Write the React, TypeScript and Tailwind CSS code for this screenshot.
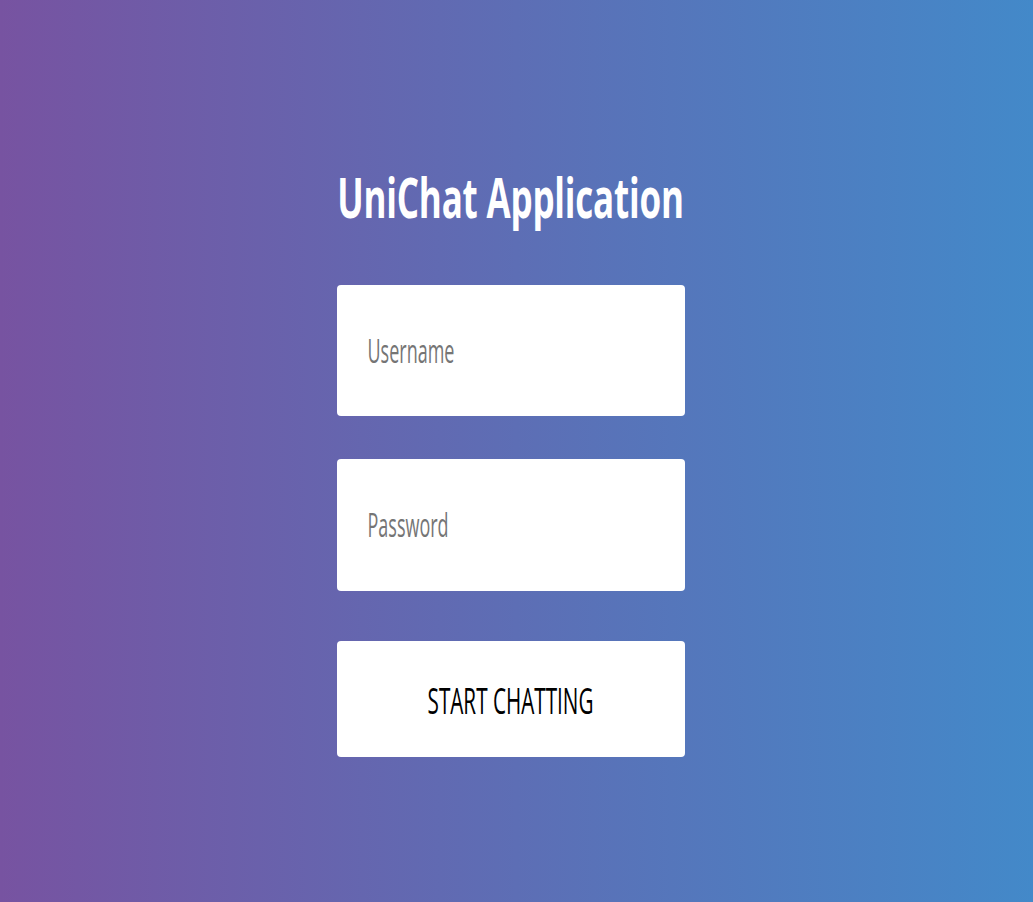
export default function App() {
  return (
    <main
      className="h-[902px] w-full overflow-hidden bg-[linear-gradient(90deg,#7753a1,#4389c9)] flex flex-col items-center pr-[12px]"
      style={{ fontFamily: '"Open Sans", "Noto Sans", sans-serif' }}
    >
      {/* TITLE */}
      <div className="mt-[166px] h-[60px] flex items-center justify-center">
        <h1 className="inline-block scale-y-[1.6] text-[35px] font-bold leading-none text-white tracking-[-0.2px]">
          UniChat Application
        </h1>
      </div>

      {/* FORM */}
      <form className="mt-[59px] w-[348px] flex flex-col">
        <Field label="Username" h="h-[131px]" />
        <div className="h-[43px]" />
        <Field label="Password" h="h-[132px]" />
        <div className="h-[50px]" />
        <button
          type="button"
          className="h-[116px] w-full rounded-[4px] bg-white flex items-center justify-center"
        >
          <span className="inline-block scale-y-[1.76] text-[20.7px] leading-none text-black translate-y-[1px]">
            START CHATTING
          </span>
        </button>
      </form>
    </main>
  );
}

function Field({ label, h }: { label: string; h: string }) {
  return (
    <div className={`${h} w-full rounded-[4px] bg-white flex items-center pl-[31px]`}>
      <span className="inline-block scale-y-[1.85] text-[18px] leading-none text-[#757575] -translate-y-[1px]">
        {label}
      </span>
    </div>
  );
}
